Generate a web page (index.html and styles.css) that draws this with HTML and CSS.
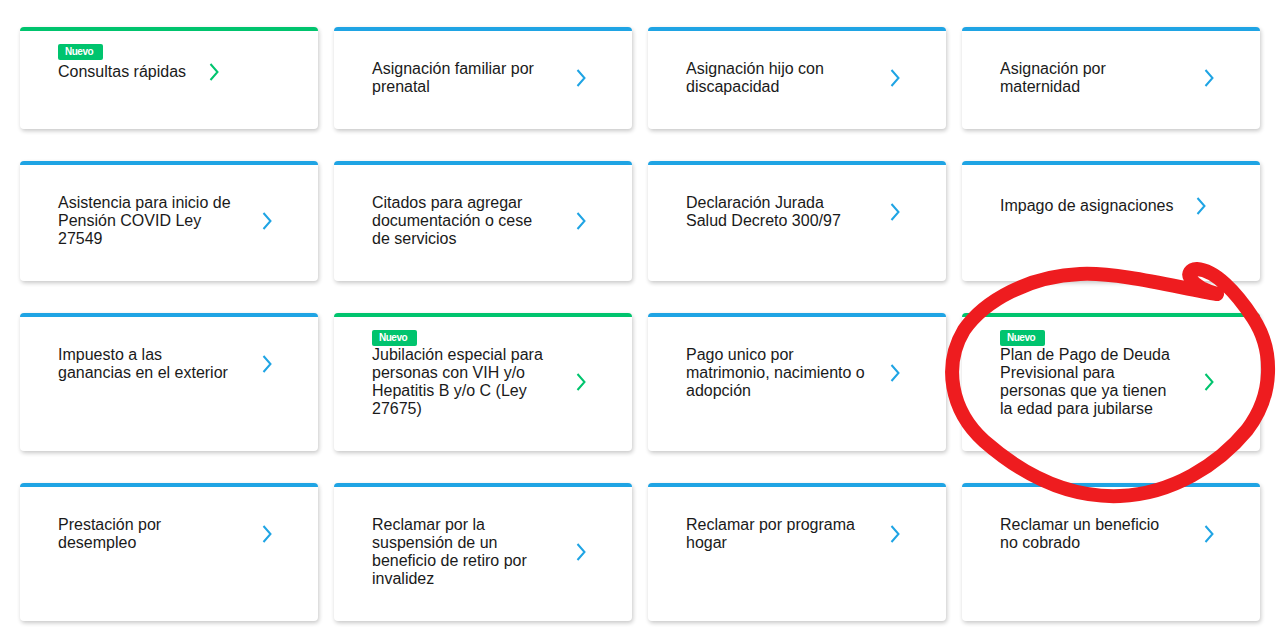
FILE: index.html
```html
<!DOCTYPE html>
<html lang="es">
<head>
<meta charset="utf-8">
<title>Trámites</title>
<link rel="stylesheet" href="styles.css">
</head>
<body>
<main class="grid">
  <a class="card card-new"><div class="row"><span class="badge">Nuevo</span><div class="title">Consultas rápidas</div><svg class="chev" viewBox="0 0 10 24"><polyline points="1.5,4 8.5,12 1.5,20"/></svg></div></a>
  <a class="card"><div class="row"><div class="title">Asignación familiar por prenatal</div><svg class="chev" viewBox="0 0 10 24"><polyline points="1.5,4 8.5,12 1.5,20"/></svg></div></a>
  <a class="card"><div class="row"><div class="title">Asignación hijo con discapacidad</div><svg class="chev" viewBox="0 0 10 24"><polyline points="1.5,4 8.5,12 1.5,20"/></svg></div></a>
  <a class="card"><div class="row"><div class="title">Asignación por maternidad</div><svg class="chev" viewBox="0 0 10 24"><polyline points="1.5,4 8.5,12 1.5,20"/></svg></div></a>

  <a class="card"><div class="row"><div class="title">Asistencia para inicio de Pensión COVID Ley 27549</div><svg class="chev" viewBox="0 0 10 24"><polyline points="1.5,4 8.5,12 1.5,20"/></svg></div></a>
  <a class="card"><div class="row"><div class="title">Citados para agregar documentación o cese de servicios</div><svg class="chev" viewBox="0 0 10 24"><polyline points="1.5,4 8.5,12 1.5,20"/></svg></div></a>
  <a class="card"><div class="row"><div class="title">Declaración Jurada Salud Decreto 300/97</div><svg class="chev" viewBox="0 0 10 24"><polyline points="1.5,4 8.5,12 1.5,20"/></svg></div></a>
  <a class="card"><div class="row"><div class="title">Impago de asignaciones</div><svg class="chev" viewBox="0 0 10 24"><polyline points="1.5,4 8.5,12 1.5,20"/></svg></div></a>

  <a class="card"><div class="row"><div class="title">Impuesto a las ganancias en el exterior</div><svg class="chev" viewBox="0 0 10 24"><polyline points="1.5,4 8.5,12 1.5,20"/></svg></div></a>
  <a class="card card-new"><div class="row"><span class="badge">Nuevo</span><div class="title">Jubilación especial para personas con VIH y/o Hepatitis B y/o C (Ley 27675)</div><svg class="chev" viewBox="0 0 10 24"><polyline points="1.5,4 8.5,12 1.5,20"/></svg></div></a>
  <a class="card"><div class="row"><div class="title">Pago unico por matrimonio, nacimiento o adopción</div><svg class="chev" viewBox="0 0 10 24"><polyline points="1.5,4 8.5,12 1.5,20"/></svg></div></a>
  <a class="card card-new"><div class="row"><span class="badge">Nuevo</span><div class="title">Plan de Pago de Deuda Previsional para personas que ya tienen la edad para jubilarse</div><svg class="chev" viewBox="0 0 10 24"><polyline points="1.5,4 8.5,12 1.5,20"/></svg></div></a>

  <a class="card"><div class="row"><div class="title">Prestación por desempleo</div><svg class="chev" viewBox="0 0 10 24"><polyline points="1.5,4 8.5,12 1.5,20"/></svg></div></a>
  <a class="card"><div class="row"><div class="title">Reclamar por la suspensión de un beneficio de retiro por invalidez</div><svg class="chev" viewBox="0 0 10 24"><polyline points="1.5,4 8.5,12 1.5,20"/></svg></div></a>
  <a class="card"><div class="row"><div class="title">Reclamar por programa hogar</div><svg class="chev" viewBox="0 0 10 24"><polyline points="1.5,4 8.5,12 1.5,20"/></svg></div></a>
  <a class="card"><div class="row"><div class="title">Reclamar un beneficio no cobrado</div><svg class="chev" viewBox="0 0 10 24"><polyline points="1.5,4 8.5,12 1.5,20"/></svg></div></a>
</main>
<svg class="annotation" viewBox="0 0 1284 628" width="1284" height="628">
  <path d="M1217,294 C1180,288 1120,272 1080,274 C1030,276 985,300 964,330 C943,365 950,410 984,441 C1024,476 1070,498 1120,496 C1172,494 1218,465 1247,430 C1274,395 1274,350 1253,318 C1236,292 1215,270 1197,269 C1183,270 1187,285 1217,294"/>
</svg>
</body>
</html>
```

FILE: styles.css
```css
html, body {
  margin: 0;
  padding: 0;
  background: #ffffff;
}

body {
  font-family: "Liberation Sans", Arial, sans-serif;
  color: #1a1a1a;
  position: relative;
  width: 1284px;
  height: 628px;
  overflow: hidden;
}

.grid {
  display: grid;
  grid-template-columns: repeat(4, 298px);
  column-gap: 16px;
  row-gap: 32px;
  padding: 27px 0 0 20px;
}

.card {
  display: block;
  background: #ffffff;
  border-top: 4px solid #1fa4e4;
  border-radius: 4px;
  box-shadow: 1px 2px 4px rgba(0, 0, 0, 0.22);
  padding: 29px 20px 33px 38px;
  text-decoration: none;
  color: inherit;
}

.card-new {
  border-top-color: #00c46e;
}

.row {
  position: relative;
  display: flex;
  align-items: center;
}

.title {
  max-width: 181px;
  font-size: 16px;
  line-height: 18px;
}

.badge {
  position: absolute;
  left: 0;
  top: -16px;
  box-sizing: border-box;
  width: 45px;
  height: 16px;
  padding-left: 7px;
  border-radius: 2px;
  background: #00c46e;
  color: #ffffff;
  font-size: 10px;
  font-weight: bold;
  letter-spacing: -0.5px;
  line-height: 16px;
}

.chev {
  flex: none;
  width: 10px;
  height: 24px;
  margin-left: 23px;
  fill: none;
  stroke: #1fa4e4;
  stroke-width: 2;
}

.card-new .chev {
  stroke: #00c46e;
}

.annotation {
  position: absolute;
  left: 0;
  top: 0;
  pointer-events: none;
  fill: none;
  stroke: #ee1c1f;
  stroke-width: 14;
  stroke-linecap: round;
  stroke-linejoin: round;
}
```
